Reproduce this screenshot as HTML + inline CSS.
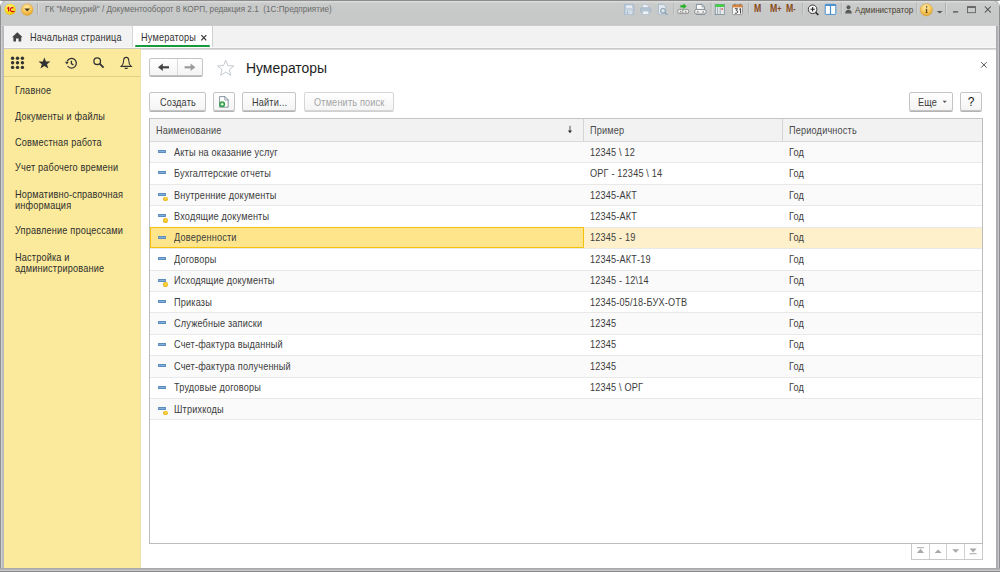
<!DOCTYPE html>
<html><head><meta charset="utf-8">
<style>
*{box-sizing:border-box;margin:0;padding:0}
html,body{width:1000px;height:572px;overflow:hidden;background:#fff;font-family:"Liberation Sans",sans-serif;color:#333}
.abs{position:absolute}
#frame{position:absolute;left:0;top:0;width:1000px;height:572px;background:linear-gradient(90deg,#909090 0,#909090 1px,#d0d0d0 1px,#d0d0d0 2px,#bcbdc2 2px,#b8b9bd 4px,#a8a8ac 996px,#b0b0b4 997px,#b0b0b4 998px,#c8c8cc 998px,#c8c8cc 999px,#8f8f8f 999px);border-radius:7px 7px 0 0}
#title{position:absolute;left:1px;top:1px;width:998px;height:25px;background:linear-gradient(#dcdcdc 0,#d8d8d8 1px,#cacbcb 2.5px,#c7c9c8 12px,#c7c9c8 23px,#c2c2c2 24px,#d8d8d8 25px);border-radius:6px 6px 0 0}
#tabs{position:absolute;left:4px;top:26px;width:992px;height:22px;background:linear-gradient(#f2f2f2 0,#f2f2f2 21px,#f8f8f8 21px)}
#tabline{position:absolute;left:4px;top:48px;width:992px;height:2px;background:linear-gradient(#c9c9c9 0,#c9c9c9 1px,#dcdcdc 1px)}
#content{position:absolute;left:4px;top:50px;width:992px;height:518px;background:#fff}
#bottom{position:absolute;left:0;top:568px;width:1000px;height:4px;background:linear-gradient(#a8a8a8 0,#a8a8a8 1px,#b4b4b8 1px,#b4b4b8 2px,#c8c8cc 2px,#c8c8cc 3px,#8a8a8a 3px)}
#panel{position:absolute;left:4px;top:49px;width:137px;height:519px;background:#fbea9b;border-right:1px solid #ece0a6}
.t{position:absolute;white-space:nowrap;line-height:1}
.pi{position:absolute;left:14.6px;font-size:10.4px;color:#2e2e2e;white-space:nowrap;line-height:11px;transform:scaleX(0.88);letter-spacing:0.2px;transform-origin:0 0;margin-top:-1.1px}
.btn{position:absolute;border:1px solid #c4c4c4;border-radius:2px;background:linear-gradient(#ffffff,#f4f4f4);box-shadow:0 1px 0 #b3b3b3}
.btn.dis{border-color:#d6d6d6;box-shadow:0 1px 0 #d0d0d0}
.bt{position:absolute;font-size:10.4px;line-height:1;color:#3c3c3c;white-space:nowrap;transform:scaleX(0.88);letter-spacing:0.2px;transform-origin:0 0;margin-top:-1px}
.row{position:absolute;left:150px;width:832px;height:21.42px;border-bottom:1px solid #e9e9e9}
.odd{background:#fafafa}
.sel{background:#fef0ca;border-bottom:1px solid #e9e9e9}
.selcell{position:absolute;left:150px;width:433.5px;background:#fee58c;border:1.5px solid #f6c10a}
.c{position:absolute;font-size:10.4px;line-height:1;color:#3c3c3c;white-space:nowrap;transform:scaleX(0.88);letter-spacing:0.2px;transform-origin:0 0;margin-top:-1px}
.ib{position:absolute;left:158.2px;width:7.8px;height:3px;border-radius:1px;background:linear-gradient(#5a8abc,#82b0dc 50%,#5a8abc);box-shadow:inset 0 0 0 0.6px #4f80b2}
.idot{position:absolute;left:163.4px;width:4.4px;height:4.4px;border-radius:50%;background:radial-gradient(circle at 55% 45%,#ffe060 0,#f0c020 45%,#c89810 100%)}
.sep{position:absolute;top:2.5px;width:1px;height:12px;background:#b0b0b0;box-shadow:1px 0 0 #d8d8d8}
.mm{position:absolute;top:4.3px;font-size:10.4px;font-weight:bold;color:#8a4a1c;transform:scaleX(0.84);transform-origin:0 0;line-height:1;white-space:nowrap}
.sb{position:absolute;top:543px;height:16.5px;border:1px solid #c7c7c7;border-top:none;background:#fff}
</style></head><body>
<div id="frame"></div>
<div id="title"></div>
<div class="abs" style="left:0;top:0;width:1000px;height:1px;background:#8c8c8c;border-radius:7px 7px 0 0"></div>
<div id="tabs"></div>
<div id="tabline"></div>
<div id="content"></div>
<div id="panel"></div>
<div id="bottom"></div>

<!-- ===== title bar ===== -->
<svg class="abs" style="left:3px;top:2px" width="40" height="16" viewBox="0 0 40 16">
  <defs>
    <radialGradient id="gy" cx="0.45" cy="0.35" r="0.7"><stop offset="0" stop-color="#fff7a0"/><stop offset="0.6" stop-color="#f8e020"/><stop offset="1" stop-color="#e0b000"/></radialGradient>
    <radialGradient id="go" cx="0.45" cy="0.3" r="0.75"><stop offset="0" stop-color="#ffe9a8"/><stop offset="0.6" stop-color="#f8c350"/><stop offset="1" stop-color="#dc9a20"/></radialGradient>
  </defs>
  <circle cx="7.2" cy="7.4" r="5.6" fill="url(#gy)"/>
  <path d="M4.3 6.6 L5.6 5.6 V9.6" fill="none" stroke="#d80c0c" stroke-width="1.3"/>
  <path d="M10.4 6.2 A1.9 1.9 0 1 0 10.4 9" stroke="#d80c0c" stroke-width="1.2" fill="none"/>
  <path d="M8.2 9.6 H11.6" stroke="#d80c0c" stroke-width="1"/>
  <circle cx="24.2" cy="7.6" r="5.8" fill="url(#go)" stroke="#d89a30" stroke-width="0.4"/>
  <path d="M21.4 6.6 H27 L24.2 9.4 Z" fill="#4a3a20"/>
</svg>
<div class="sep" style="left:37px"></div>
<div class="t" style="left:44.8px;top:5.2px;font-size:9.2px;color:#6a6a6a;transform:scaleX(0.89);transform-origin:0 0">ГК "Меркурий" / Документооборот 8 КОРП, редакция 2.1&nbsp; (1С:Предприятие)</div>

<!-- right title icons -->
<svg class="abs" style="left:620px;top:2px" width="380" height="22" viewBox="620 2 380 22">
  <!-- floppy disabled -->
  <g>
   <rect x="624.4" y="4.4" width="9.4" height="10" rx="0.6" fill="#c4d0dc" stroke="#a4b8cc" stroke-width="0.9"/>
   <rect x="626" y="5" width="6.2" height="3.6" fill="#e6ecf2" stroke="#b4c4d4" stroke-width="0.5"/>
   <rect x="626.2" y="10.6" width="5.8" height="3.6" fill="#d4dee8"/>
   <rect x="627.2" y="11.6" width="0.9" height="2" fill="#8aa0b4"/>
  </g>
  <!-- printer disabled -->
  <g>
   <path d="M642.6 4.6 H646.4 L648.4 6.6 V8 H642.6 Z" fill="#eef2f6" stroke="#b0c0d0" stroke-width="0.7"/>
   <rect x="640.6" y="7.8" width="10.2" height="4.4" rx="1" fill="#b4c4d2" stroke="#a0b4c6" stroke-width="0.7"/>
   <rect x="642.4" y="11" width="6.4" height="3.4" fill="#eef2f6" stroke="#b0c0d0" stroke-width="0.7"/>
  </g>
  <!-- preview disabled -->
  <g>
   <path d="M658.4 4.4 H663.6 L665.6 6.4 V14.2 H658.4 Z" fill="#e2e8ee" stroke="#a8bacb" stroke-width="0.9"/>
   <circle cx="663" cy="10.8" r="2.3" fill="#dfe6ec" stroke="#8ea4b8" stroke-width="1.1"/>
   <path d="M664.6 12.6 L667.4 14.8" stroke="#8ea4b8" stroke-width="1.3"/>
  </g>
  <rect x="673.4" y="2.5" width="1" height="12" fill="#b0b0b0"/><rect x="674.4" y="2.5" width="1" height="12" fill="#d8d8d8"/>
  <!-- link with green arrow -->
  <g>
   <rect x="677.6" y="9.4" width="6.2" height="4.2" rx="2" fill="#f2f2f2" stroke="#8a8a8a" stroke-width="0.9"/>
   <rect x="682.6" y="9.4" width="6.2" height="4.2" rx="2" fill="#f2f2f2" stroke="#8a8a8a" stroke-width="0.9"/>
   <path d="M679.2 12.4 L680.6 10.6 L682 12.4 Z M684.4 12.4 L685.8 10.6 L687.2 12.4 Z" fill="#8a8a8a"/>
   <rect x="680.4" y="5.2" width="3.4" height="2.2" fill="#22b022"/>
   <path d="M683.4 3.6 L686.6 6.3 L683.4 9 Z" fill="#22b022"/>
  </g>
  <!-- print link -->
  <g>
   <path d="M696.4 4.4 H702.2 L704.4 6.8 V9.6 H696.4 Z" fill="#fafafa" stroke="#7a8a98" stroke-width="0.9"/>
   <path d="M702 4.6 V7 H704.2" fill="#c0ccd6" stroke="#7a8a98" stroke-width="0.6"/>
   <rect x="694.6" y="9.4" width="11.6" height="4.6" rx="2" fill="#f0f0f0" stroke="#808890" stroke-width="0.9"/>
   <path d="M696.4 12.6 L697.8 10.8 L699.2 12.6 Z M701.8 12.6 L703.2 10.8 L704.6 12.6 Z" fill="#8a8a8a"/>
   <rect x="696" y="14" width="9" height="0.9" fill="#8a9098"/>
  </g>
  <rect x="710.6" y="2.5" width="1" height="12" fill="#b0b0b0"/><rect x="711.6" y="2.5" width="1" height="12" fill="#d8d8d8"/>
  <!-- green table -->
  <g>
   <rect x="715.3" y="4.4" width="9" height="10.2" fill="#e8ecee" stroke="#7a8a94" stroke-width="0.8"/>
   <rect x="715.3" y="4.4" width="9" height="2.6" fill="#44cc44"/>
   <path d="M717.6 7.2 V14.4 M720.2 7.2 V14.4" stroke="#8c9aa4" stroke-width="0.8"/>
   <rect x="721.3" y="8.2" width="1.6" height="1.6" fill="#e05050"/>
  </g>
  <!-- calendar -->
  <g>
   <rect x="732.5" y="4.6" width="10" height="10" rx="1" fill="#fafafa" stroke="#8a8a8a" stroke-width="0.8"/>
   <rect x="732.5" y="4.6" width="10" height="2.8" fill="#d8843c"/>
   <rect x="734.5" y="3.6" width="0.9" height="2" fill="#777"/><rect x="739.6" y="3.6" width="0.9" height="2" fill="#777"/>
   <path d="M734.8 8.7 H737.6 L736.1 10.5 Q738.1 10.6 737.8 12.1 Q737.4 13.7 734.8 13.2" fill="none" stroke="#3a3a3a" stroke-width="0.9"/><path d="M739.2 9.4 L740.6 8.6 V13.6" fill="none" stroke="#3a3a3a" stroke-width="1"/>
  </g>
  <rect x="748.2" y="2.5" width="1" height="12" fill="#b0b0b0"/><rect x="749.2" y="2.5" width="1" height="12" fill="#d8d8d8"/>
  <rect x="802.2" y="2.5" width="1" height="12" fill="#b0b0b0"/><rect x="803.2" y="2.5" width="1" height="12" fill="#d8d8d8"/>
  <!-- zoom -->
  <g>
   <circle cx="812.6" cy="9.3" r="4.3" fill="#f6f6f6" stroke="#3a3a3a" stroke-width="1"/>
   <path d="M810.4 9.3 H814.8 M812.6 7.1 V11.5" stroke="#222" stroke-width="1.1"/>
   <path d="M815.6 12.3 L818.4 15" stroke="#2a2a2a" stroke-width="1.6"/>
  </g>
  <!-- panel -->
  <g>
   <rect x="825.2" y="4.4" width="10.6" height="10" rx="0.6" fill="#fff" stroke="#4a90d0" stroke-width="1"/>
   <rect x="825.2" y="4.4" width="10.6" height="1.6" fill="#4a90d0"/>
   <rect x="829.9" y="5" width="1.2" height="9.4" fill="#4a90d0"/>
  </g>
  <rect x="840.8" y="2.5" width="1" height="12" fill="#b0b0b0"/><rect x="841.8" y="2.5" width="1" height="12" fill="#d8d8d8"/>
  <!-- user -->
  <g fill="#5a5a5a">
   <circle cx="848.5" cy="7.2" r="2"/>
   <path d="M845.2 13.4 Q845.4 9.8 848.5 9.8 Q851.6 9.8 851.8 13.4 Z"/>
  </g>
  <rect x="916.3" y="2.5" width="1" height="12" fill="#b0b0b0"/><rect x="917.3" y="2.5" width="1" height="12" fill="#d8d8d8"/>
  <!-- info -->
  <circle cx="926.4" cy="9.8" r="6.1" fill="url(#go2)" stroke="#d09a30" stroke-width="0.5"/>
  <defs><radialGradient id="go2" cx="0.45" cy="0.3" r="0.75"><stop offset="0" stop-color="#ffeeb0"/><stop offset="0.6" stop-color="#f6c452"/><stop offset="1" stop-color="#dc9a28"/></radialGradient></defs>
  <circle cx="926.6" cy="6.9" r="0.8" fill="#6a4c18"/>
  <path d="M925.6 8.8 H927.2 V12.4 H927.8 V13 H925.2 V12.4 H925.9 V9.4 H925.6 Z" fill="#6a4c18"/>
  <path d="M936.8 11 H942.6 L939.7 13.4 Z" fill="#555"/>
  <rect x="945" y="2.5" width="1" height="12" fill="#b0b0b0"/><rect x="946" y="2.5" width="1" height="12" fill="#d8d8d8"/>
  <!-- window controls -->
  <rect x="953" y="11.3" width="5.2" height="1.2" fill="#484848"/>
  <rect x="967.4" y="6.7" width="8" height="6" fill="none" stroke="#555" stroke-width="0.8"/>
  <rect x="967.4" y="6.6" width="8" height="1.2" fill="#555"/>
  <path d="M984.9 6.5 L990.8 12.5 M990.8 6.5 L984.9 12.5" stroke="#444" stroke-width="1.05"/>
</svg>
<div class="mm" style="left:754.4px">M</div>
<div class="mm" style="left:769.6px">M<span style="font-size:8.5px">+</span></div>
<div class="mm" style="left:786.3px">M<span style="font-size:8.5px">-</span></div>
<div class="t" style="left:855px;top:5.4px;font-size:9.4px;color:#4a4232;transform:scaleX(0.86);transform-origin:0 0">Администратор</div>

<!-- ===== tabs ===== -->
<svg class="abs" style="left:12px;top:31.5px" width="12" height="10" viewBox="0 0 12 10">
  <path d="M5.3 0.3 L10.6 5.2 L9.2 5.2 L9.2 9.4 L6.6 9.4 L6.6 6.6 L4 6.6 L4 9.4 L1.4 9.4 L1.4 5.2 L0 5.2 Z" fill="#444"/>
</svg>
<div class="t" style="left:30.4px;top:33.4px;font-size:10.4px;color:#333;transform:scaleX(0.88);letter-spacing:0.2px;transform-origin:0 0">Начальная страница</div>
<div class="abs" style="left:132px;top:26px;width:1px;height:21px;background:#d6d6d6"></div>
<div class="abs" style="left:133px;top:26px;width:79px;height:21.5px;background:#fff"></div>
<div class="abs" style="left:212px;top:26px;width:1px;height:21px;background:#d0d0d0"></div>
<div class="abs" style="left:135.3px;top:45.4px;width:75px;height:1.7px;background:#18993a;border-radius:1px"></div>
<div class="t" style="left:140.8px;top:33.2px;font-size:10.4px;color:#333;transform:scaleX(0.88);letter-spacing:0.2px;transform-origin:0 0">Нумераторы</div>
<svg class="abs" style="left:200px;top:33.5px" width="8" height="8" viewBox="0 0 8 8"><path d="M1.3 1.1 L6.3 6.3 M6.3 1.1 L1.3 6.3" stroke="#333" stroke-width="1.2"/></svg>

<!-- ===== section panel ===== -->
<div class="abs" style="left:4px;top:76px;width:136px;height:1px;background:#e2cf82"></div>
<svg class="abs" style="left:10px;top:55px" width="126" height="16" viewBox="10 55 126 16">
  <g fill="#333">
   <circle cx="12.6" cy="58.2" r="1.7"/><circle cx="17.5" cy="58.2" r="1.7"/><circle cx="22.4" cy="58.2" r="1.7"/>
   <circle cx="12.6" cy="62.8" r="1.7"/><circle cx="17.5" cy="62.8" r="1.7"/><circle cx="22.4" cy="62.8" r="1.7"/>
   <circle cx="12.6" cy="67.4" r="1.7"/><circle cx="17.5" cy="67.4" r="1.7"/><circle cx="22.4" cy="67.4" r="1.7"/>
  </g>
  <path d="M44.4 57.4 L46 61.4 L50.4 61.5 L47 64.2 L48.3 68.5 L44.4 66 L40.5 68.5 L41.8 64.2 L38.4 61.5 L42.8 61.4 Z" fill="#333"/>
  <g fill="none" stroke="#333" stroke-width="1.3">
   <path d="M67.2 61.2 A4.8 4.8 0 1 1 67.6 66"/>
   <path d="M71.4 60.8 V63.6 L73.4 65"/>
  </g>
  <path d="M65 61.8 L66.8 64.6 L68.8 61.8 Z" fill="#333"/>
  <g fill="none" stroke="#333">
   <circle cx="97.2" cy="61.2" r="3.3" stroke-width="1.3"/>
   <path d="M99.6 63.6 L103.6 67.6" stroke-width="1.9"/>
  </g>
  <g fill="none" stroke="#333" stroke-width="1.1">
   <path d="M121.2 66.4 Q123.6 64.4 123.6 61 Q123.6 57.4 126.2 57.4 Q128.8 57.4 128.8 61 Q128.8 64.4 131.2 66.4 Z"/>
  </g>
  <path d="M124.4 67.8 H128 L127.4 69 H125 Z" fill="#333"/>
</svg>
<div class="pi" style="top:86.2px">Главное</div>
<div class="pi" style="top:111.9px">Документы и файлы</div>
<div class="pi" style="top:137.7px">Совместная работа</div>
<div class="pi" style="top:163.5px">Учет рабочего времени</div>
<div class="pi" style="top:189.7px">Нормативно-справочная<br>информация</div>
<div class="pi" style="top:226.5px">Управление процессами</div>
<div class="pi" style="top:252.7px">Настройка и<br>администрирование</div>

<!-- ===== form header ===== -->
<div class="btn" style="left:149.4px;top:58px;width:54px;height:17.5px"></div>
<div class="abs" style="left:177px;top:59px;width:1px;height:15.5px;background:#dcdcdc"></div>
<svg class="abs" style="left:155px;top:61px" width="45" height="12" viewBox="155 61 45 12">
  <path d="M161.4 66.2 H169 V68.4 H161.4 Z" fill="#444"/>
  <path d="M158 67.3 L162.8 63.6 V71 Z" fill="#444"/>
  <path d="M184.6 66.2 H192 V68.4 H184.6 Z" fill="#9c9c9c"/>
  <path d="M195.4 67.3 L190.6 63.6 V71 Z" fill="#9c9c9c"/>
</svg>
<svg class="abs" style="left:216px;top:59px" width="20" height="18" viewBox="216 59 20 18">
  <path d="M225.7 60.2 L227.9 65.6 L233.9 65.9 L229.3 69.6 L230.8 75.3 L225.7 72.1 L220.6 75.3 L222.1 69.6 L217.5 65.9 L223.5 65.6 Z" fill="#fff" stroke="#b4bcc4" stroke-width="0.8"/>
</svg>
<div class="t" style="left:246.3px;top:60.2px;font-size:15.3px;color:#1e1e1e;transform:scaleX(0.91);transform-origin:0 0">Нумераторы</div>
<svg class="abs" style="left:979.4px;top:60.4px" width="10" height="10" viewBox="0 0 10 10"><path d="M2.2 2.2 L7.6 7.6 M7.6 2.2 L2.2 7.6" stroke="#555" stroke-width="1"/></svg>

<!-- ===== command bar ===== -->
<div class="btn" style="left:149.4px;top:92.4px;width:56.2px;height:18.8px"></div>
<div class="bt" style="left:159.5px;top:98.9px">Создать</div>
<div class="btn" style="left:213.2px;top:92.4px;width:21.5px;height:18.8px"></div>
<svg class="abs" style="left:216px;top:94px" width="16" height="16" viewBox="216 94 16 16">
  <path d="M219.6 96.6 H225 L228.2 99.8 V107.2 H219.6 Z" fill="#fff" stroke="#6a7a88" stroke-width="0.8"/>
  <path d="M224.8 96.6 V100 H228.2" fill="none" stroke="#6a7a88" stroke-width="0.7"/>
  <circle cx="222.2" cy="104.2" r="2.9" fill="#2aa040"/>
  <path d="M220.6 104.2 H223.8 M222.2 102.6 V105.8" stroke="#fff" stroke-width="1"/>
</svg>
<div class="btn" style="left:241.9px;top:92.4px;width:54.6px;height:18.8px"></div>
<div class="bt" style="left:252.3px;top:98.9px">Найти...</div>
<div class="btn dis" style="left:303.5px;top:92.4px;width:90.2px;height:18.8px"></div>
<div class="bt" style="left:313.9px;top:98.9px;color:#a4a4a4">Отменить поиск</div>
<div class="btn" style="left:909.2px;top:92.4px;width:44px;height:18.8px"></div>
<div class="bt" style="left:918px;top:98.9px">Еще</div>
<svg class="abs" style="left:942px;top:100px" width="6" height="4" viewBox="0 0 6 4"><path d="M0.6 0.8 H4.8 L2.7 3 Z" fill="#555"/></svg>
<div class="btn" style="left:960.2px;top:92.4px;width:21.5px;height:18.8px"></div>
<div class="t" style="left:967.8px;top:96.4px;font-size:12px;color:#1a1a1a">?</div>

<!-- ===== table ===== -->
<div class="abs" style="left:149px;top:118px;width:834px;height:426px;border:1px solid #bcbcbc;border-top-color:#c4c4c4;background:#fff"></div>
<div class="abs" style="left:150px;top:119px;width:832px;height:23px;background:#f2f2f2;border-bottom:1px solid #dadada"></div>
<div class="abs" style="left:583px;top:119px;width:1px;height:22px;background:#d4d4d4"></div>
<div class="abs" style="left:782px;top:119px;width:1px;height:22px;background:#d4d4d4"></div>
<div class="c" style="left:156px;top:126.8px;color:#4a4a4a">Наименование</div>
<div class="c" style="left:590px;top:126.8px;color:#4a4a4a">Пример</div>
<div class="c" style="left:789px;top:126.8px;color:#4a4a4a">Периодичность</div>
<svg class="abs" style="left:566.4px;top:125px" width="8" height="10" viewBox="0 0 8 10"><path d="M4 0.8 V7" stroke="#444" stroke-width="0.9"/><path d="M1.9 5.6 H6.1 L4 8.2 Z" fill="#333"/></svg>

<div class="row odd" style="top:142.00px"></div><div class="ib" style="top:150.00px"></div><div class="c" style="left:174px;top:148.70px">Акты на оказание услуг</div><div class="c" style="left:590px;top:148.70px">12345 \ 12</div><div class="c" style="left:789px;top:148.70px">Год</div>
<div class="row" style="top:163.42px"></div><div class="ib" style="top:171.42px"></div><div class="c" style="left:174px;top:170.12px">Бухгалтерские отчеты</div><div class="c" style="left:590px;top:170.12px">ОРГ - 12345 \ 14</div><div class="c" style="left:789px;top:170.12px">Год</div>
<div class="row odd" style="top:184.84px"></div><div class="ib" style="top:192.84px"></div><div class="idot" style="top:196.74px"></div><div class="c" style="left:174px;top:191.54px">Внутренние документы</div><div class="c" style="left:590px;top:191.54px">12345-АКТ</div><div class="c" style="left:789px;top:191.54px">Год</div>
<div class="row" style="top:206.26px"></div><div class="ib" style="top:214.26px"></div><div class="idot" style="top:218.16px"></div><div class="c" style="left:174px;top:212.96px">Входящие документы</div><div class="c" style="left:590px;top:212.96px">12345-АКТ</div><div class="c" style="left:789px;top:212.96px">Год</div>
<div class="row sel" style="top:227.68px"></div><div class="selcell" style="top:227.28px;height:21.00px"></div><div class="ib" style="top:235.68px"></div><div class="c" style="left:174px;top:234.38px">Доверенности</div><div class="c" style="left:590px;top:234.38px">12345 - 19</div><div class="c" style="left:789px;top:234.38px">Год</div>
<div class="row" style="top:249.10px"></div><div class="ib" style="top:257.10px"></div><div class="c" style="left:174px;top:255.80px">Договоры</div><div class="c" style="left:590px;top:255.80px">12345-АКТ-19</div><div class="c" style="left:789px;top:255.80px">Год</div>
<div class="row odd" style="top:270.52px"></div><div class="ib" style="top:278.52px"></div><div class="idot" style="top:282.42px"></div><div class="c" style="left:174px;top:277.22px">Исходящие документы</div><div class="c" style="left:590px;top:277.22px">12345 - 12\14</div><div class="c" style="left:789px;top:277.22px">Год</div>
<div class="row" style="top:291.94px"></div><div class="ib" style="top:299.94px"></div><div class="c" style="left:174px;top:298.64px">Приказы</div><div class="c" style="left:590px;top:298.64px">12345-05/18-БУХ-ОТВ</div><div class="c" style="left:789px;top:298.64px">Год</div>
<div class="row odd" style="top:313.36px"></div><div class="ib" style="top:321.36px"></div><div class="c" style="left:174px;top:320.06px">Служебные записки</div><div class="c" style="left:590px;top:320.06px">12345</div><div class="c" style="left:789px;top:320.06px">Год</div>
<div class="row" style="top:334.78px"></div><div class="ib" style="top:342.78px"></div><div class="c" style="left:174px;top:341.48px">Счет-фактура выданный</div><div class="c" style="left:590px;top:341.48px">12345</div><div class="c" style="left:789px;top:341.48px">Год</div>
<div class="row odd" style="top:356.20px"></div><div class="ib" style="top:364.20px"></div><div class="c" style="left:174px;top:362.90px">Счет-фактура полученный</div><div class="c" style="left:590px;top:362.90px">12345</div><div class="c" style="left:789px;top:362.90px">Год</div>
<div class="row" style="top:377.62px"></div><div class="ib" style="top:385.62px"></div><div class="c" style="left:174px;top:384.32px">Трудовые договоры</div><div class="c" style="left:590px;top:384.32px">12345 \ ОРГ</div><div class="c" style="left:789px;top:384.32px">Год</div>
<div class="row odd" style="top:399.04px"></div><div class="ib" style="top:407.04px"></div><div class="idot" style="top:410.94px"></div><div class="c" style="left:174px;top:405.74px">Штрихкоды</div><div class="c" style="left:590px;top:405.74px"></div><div class="c" style="left:789px;top:405.74px"></div>

<!-- scroll buttons -->
<div class="abs" style="left:911px;top:544px;width:72px;height:16px;border:1px solid #c9c9c9;border-top:none;background:#fff"></div>
<div class="abs" style="left:928.5px;top:544px;width:1px;height:15px;background:#d0d0d0"></div>
<div class="abs" style="left:946px;top:544px;width:1px;height:15px;background:#d0d0d0"></div>
<div class="abs" style="left:964px;top:544px;width:1px;height:15px;background:#d0d0d0"></div>
<svg class="abs" style="left:911px;top:544px" width="72" height="17" viewBox="911 543 72 17">
  <g fill="#a8a8a8">
   <rect x="917" y="546.2" width="7" height="1"/>
   <path d="M917 552 L920.5 547.8 L924 552 Z"/>
   <path d="M934.6 552 L938.1 548.4 L941.6 552 Z"/>
   <path d="M952.2 548.2 L955.7 551.8 L959.2 548.2 Z"/>
   <path d="M969.6 547.4 L973.1 551.4 L976.6 547.4 Z"/>
   <rect x="969.6" y="552.2" width="7" height="1"/>
  </g>
</svg>
</body></html>
